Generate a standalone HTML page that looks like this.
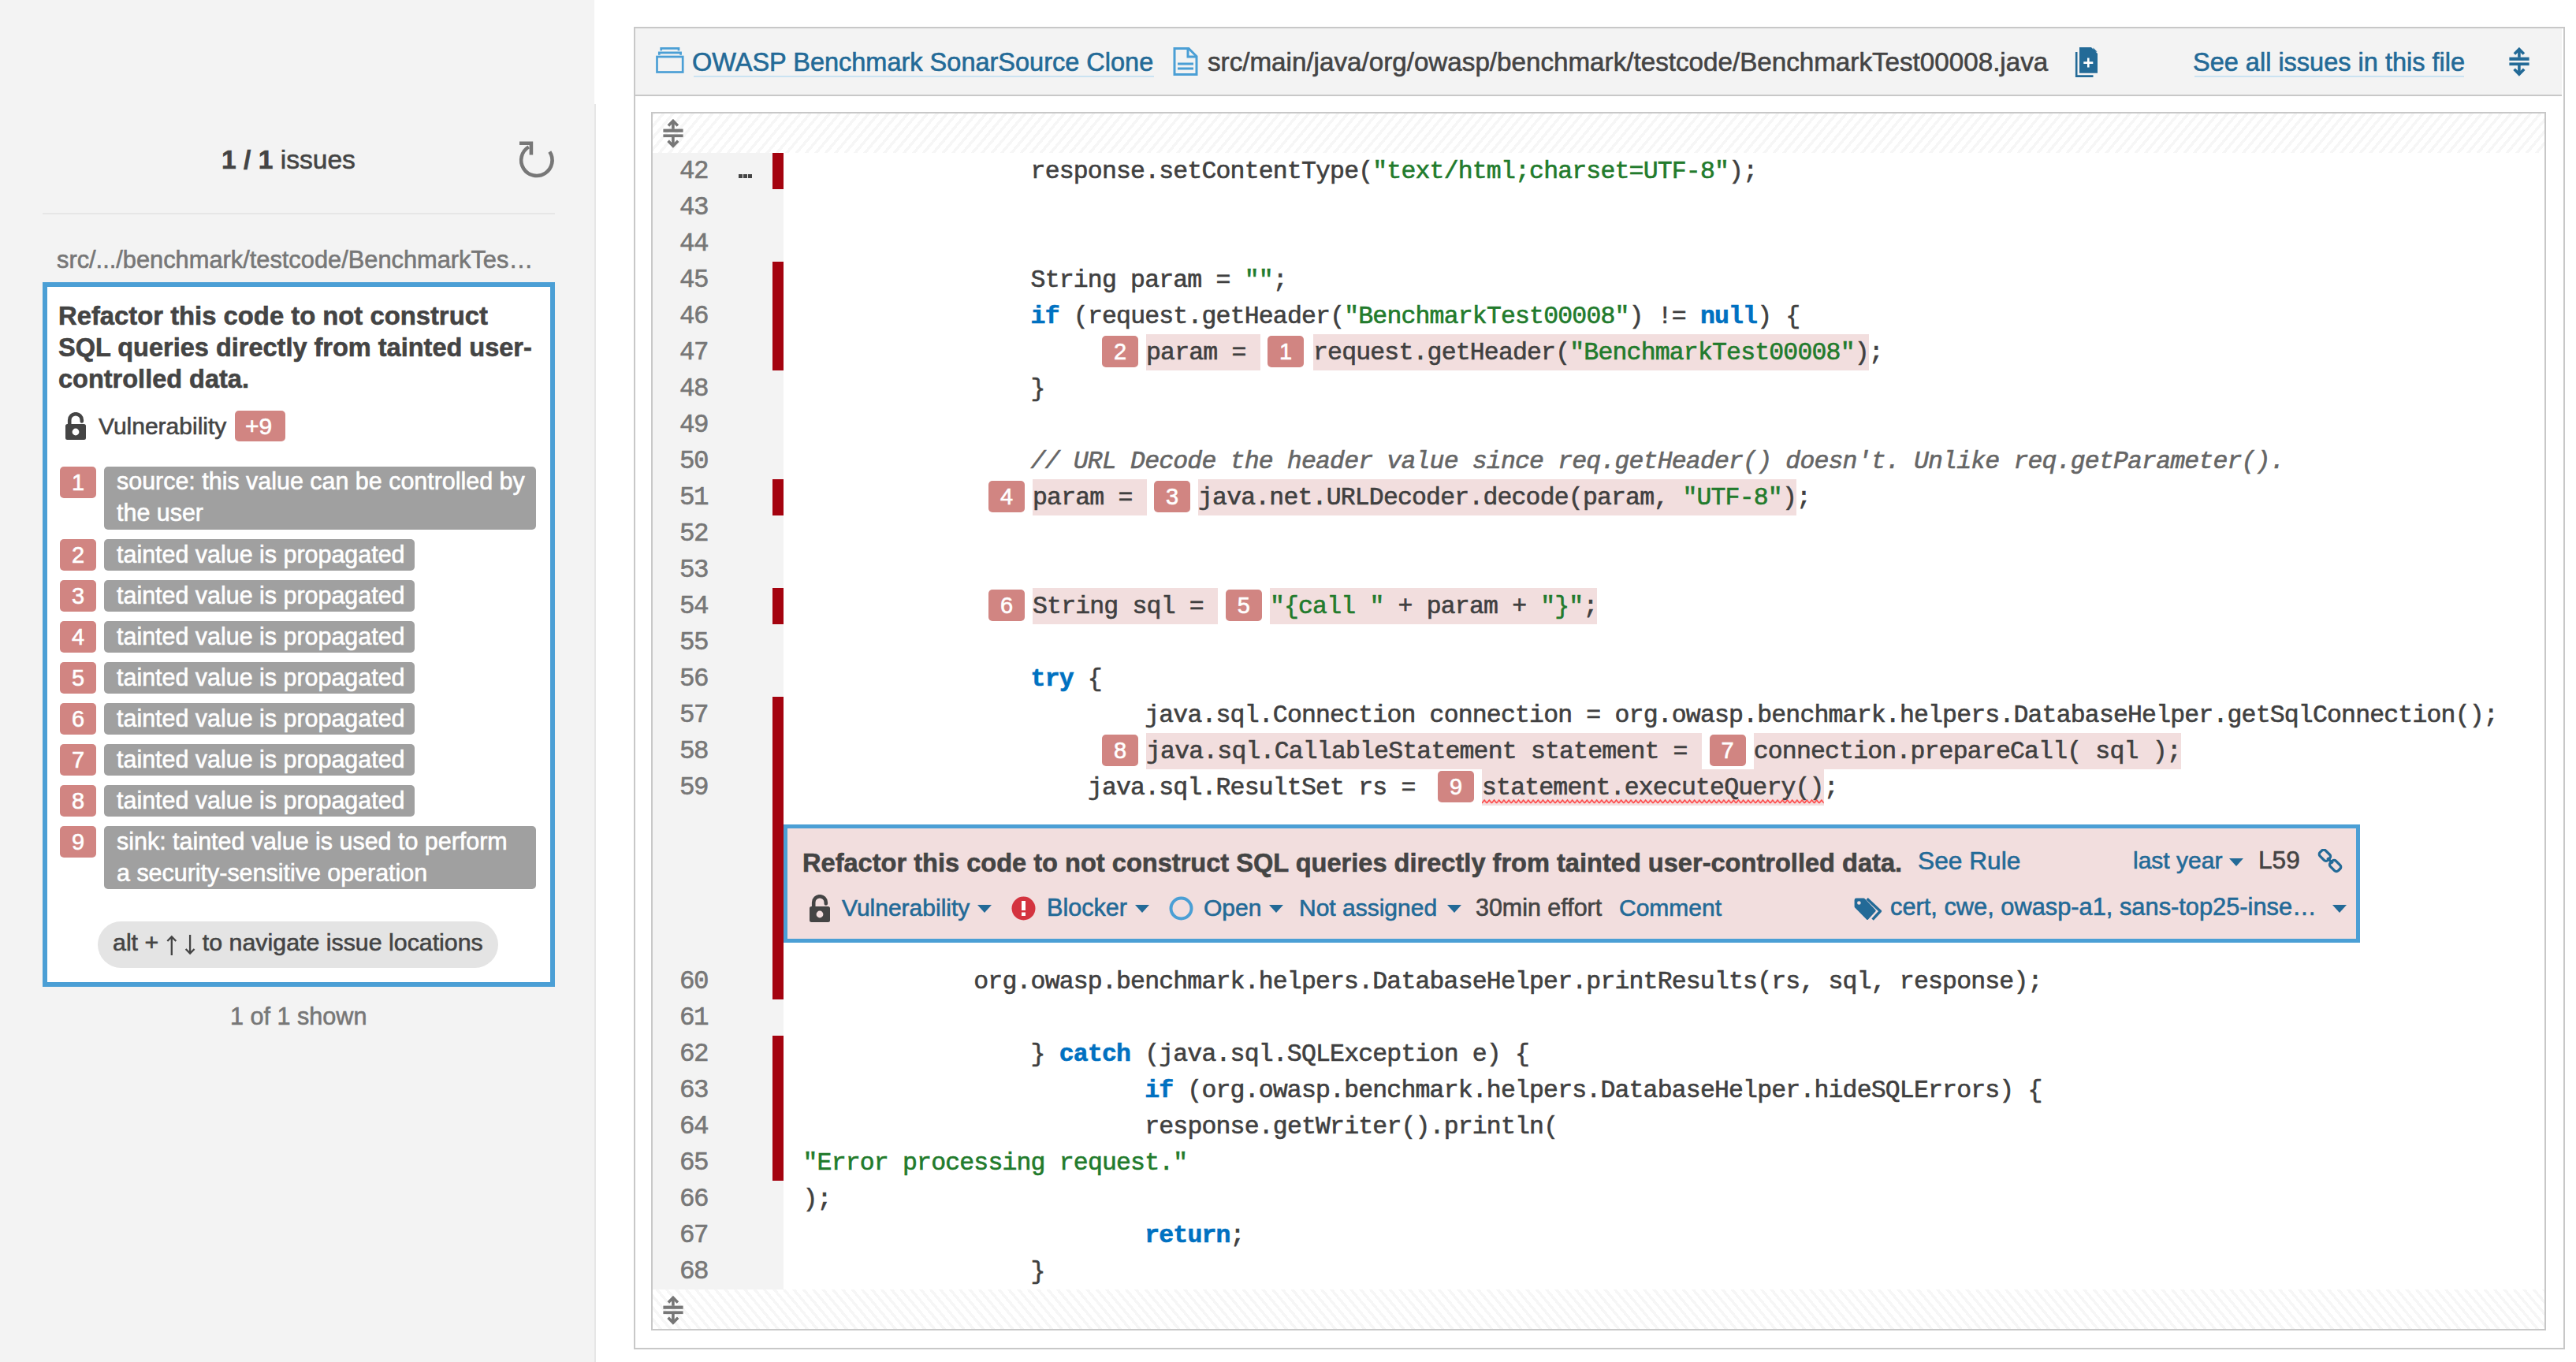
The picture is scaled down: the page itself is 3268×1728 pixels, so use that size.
<!DOCTYPE html>
<html><head><meta charset="utf-8"><title>SonarQube issue</title>
<style>
html,body{margin:0;padding:0}
body{width:3268px;height:1728px;position:relative;overflow:hidden;background:#fff;font-family:'Liberation Sans', sans-serif}
.t{position:absolute;white-space:pre;-webkit-text-stroke-width:0.6px}
.r{position:absolute;box-sizing:border-box}
.ic{position:absolute}
.mk{position:absolute;width:46px;height:40px;border-radius:5px;background:#d18582;color:#fff;font-family:'Liberation Sans', sans-serif;font-size:29px;line-height:41px;text-align:center;-webkit-text-stroke-width:0.6px}
.code{font-family:'Liberation Mono', monospace;font-size:30.1px}
</style></head><body>

<div class="r" style="left:0.0px;top:0.0px;width:754.0px;height:1728.0px;background:#f3f3f3"></div>
<div class="r" style="left:754.0px;top:132.0px;width:2.0px;height:1596.0px;background:#e6e6e6"></div>
<div class="t " style="left:281.0px;top:181.0px;font-size:33.6px;line-height:44px;color:#444;font-weight:normal;font-family:'Liberation Sans', sans-serif;"><b>1 / 1</b> issues</div>
<svg class="ic" style="left:655px;top:176px" width="52" height="52" viewBox="0 0 52 52"><path d="M42.3 16.4 A19.7 19.7 0 1 1 15.75 10.4" fill="none" stroke="#777" stroke-width="4.6"/><path d="M4 5.7 H18.9 V20.6" fill="none" stroke="#777" stroke-width="4.6" stroke-linejoin="miter"/></svg>
<div class="r" style="left:54.0px;top:270.0px;width:650.0px;height:2.0px;background:#e6e6e6"></div>
<div class="t " style="left:72.0px;top:309.8px;font-size:30.8px;line-height:40px;color:#777;font-weight:normal;font-family:'Liberation Sans', sans-serif;">src/.../benchmark/testcode/BenchmarkTes…</div>
<div class="r" style="left:54.0px;top:358.0px;width:650.0px;height:894.0px;background:#fff;border:6px solid #4b9fd5"></div>
<div class="t " style="left:74.0px;top:378.5px;font-size:32.8px;line-height:43px;color:#444;font-weight:bold;font-family:'Liberation Sans', sans-serif;">Refactor this code to not construct</div>
<div class="t " style="left:74.0px;top:420.0px;font-size:32.5px;line-height:42px;color:#444;font-weight:bold;font-family:'Liberation Sans', sans-serif;">SQL queries directly from tainted user-</div>
<div class="t " style="left:74.0px;top:459.5px;font-size:32.5px;line-height:42px;color:#444;font-weight:bold;font-family:'Liberation Sans', sans-serif;">controlled data.</div>
<svg class="ic" style="left:83px;top:523px" width="26.0" height="35.0" viewBox="0 0 26 35"><path d="M5.2 16 V10 A7.8 7.8 0 0 1 20.8 10 V11.5" fill="none" stroke="#444" stroke-width="4.6" stroke-linecap="round"/><path fill-rule="evenodd" fill="#444" d="M2.5 15 H23.5 A2.5 2.5 0 0 1 26 17.5 V32.5 A2.5 2.5 0 0 1 23.5 35 H2.5 A2.5 2.5 0 0 1 0 32.5 V17.5 A2.5 2.5 0 0 1 2.5 15 Z M13 20.6 A4.4 4.4 0 1 0 13 29.4 A4.4 4.4 0 1 0 13 20.6 Z"/></svg>
<div class="t " style="left:125.0px;top:520.6px;font-size:30px;line-height:39px;color:#444;font-weight:normal;font-family:'Liberation Sans', sans-serif;">Vulnerability</div>
<div class="r" style="left:298.0px;top:520.5px;width:64.0px;height:39.5px;background:#d18582;border-radius:5px"></div>
<div class="t " style="left:311.0px;top:520.6px;font-size:30px;line-height:39px;color:#fff;font-weight:normal;font-family:'Liberation Sans', sans-serif;">+9</div>
<div class="mk" style="left:76px;top:592.0px">1</div>
<div class="r" style="left:132.0px;top:592.0px;width:548.0px;height:80.0px;background:#a0a0a0;border-radius:5px"></div>
<div class="t " style="left:148.0px;top:590.3px;font-size:30.45px;line-height:40px;color:#fff;font-weight:normal;font-family:'Liberation Sans', sans-serif;">source: this value can be controlled by</div>
<div class="t " style="left:148.0px;top:630.3px;font-size:30.45px;line-height:40px;color:#fff;font-weight:normal;font-family:'Liberation Sans', sans-serif;">the user</div>
<div class="mk" style="left:76px;top:684.3px">2</div>
<div class="r" style="left:132.0px;top:684.3px;width:394.0px;height:40.0px;background:#a0a0a0;border-radius:5px"></div>
<div class="t " style="left:148.0px;top:682.6px;font-size:30.45px;line-height:40px;color:#fff;font-weight:normal;font-family:'Liberation Sans', sans-serif;">tainted value is propagated</div>
<div class="mk" style="left:76px;top:736.3px">3</div>
<div class="r" style="left:132.0px;top:736.3px;width:394.0px;height:40.0px;background:#a0a0a0;border-radius:5px"></div>
<div class="t " style="left:148.0px;top:734.6px;font-size:30.45px;line-height:40px;color:#fff;font-weight:normal;font-family:'Liberation Sans', sans-serif;">tainted value is propagated</div>
<div class="mk" style="left:76px;top:788.3px">4</div>
<div class="r" style="left:132.0px;top:788.3px;width:394.0px;height:40.0px;background:#a0a0a0;border-radius:5px"></div>
<div class="t " style="left:148.0px;top:786.6px;font-size:30.45px;line-height:40px;color:#fff;font-weight:normal;font-family:'Liberation Sans', sans-serif;">tainted value is propagated</div>
<div class="mk" style="left:76px;top:840.3px">5</div>
<div class="r" style="left:132.0px;top:840.3px;width:394.0px;height:40.0px;background:#a0a0a0;border-radius:5px"></div>
<div class="t " style="left:148.0px;top:838.6px;font-size:30.45px;line-height:40px;color:#fff;font-weight:normal;font-family:'Liberation Sans', sans-serif;">tainted value is propagated</div>
<div class="mk" style="left:76px;top:892.3px">6</div>
<div class="r" style="left:132.0px;top:892.3px;width:394.0px;height:40.0px;background:#a0a0a0;border-radius:5px"></div>
<div class="t " style="left:148.0px;top:890.6px;font-size:30.45px;line-height:40px;color:#fff;font-weight:normal;font-family:'Liberation Sans', sans-serif;">tainted value is propagated</div>
<div class="mk" style="left:76px;top:944.3px">7</div>
<div class="r" style="left:132.0px;top:944.3px;width:394.0px;height:40.0px;background:#a0a0a0;border-radius:5px"></div>
<div class="t " style="left:148.0px;top:942.6px;font-size:30.45px;line-height:40px;color:#fff;font-weight:normal;font-family:'Liberation Sans', sans-serif;">tainted value is propagated</div>
<div class="mk" style="left:76px;top:996.3px">8</div>
<div class="r" style="left:132.0px;top:996.3px;width:394.0px;height:40.0px;background:#a0a0a0;border-radius:5px"></div>
<div class="t " style="left:148.0px;top:994.6px;font-size:30.45px;line-height:40px;color:#fff;font-weight:normal;font-family:'Liberation Sans', sans-serif;">tainted value is propagated</div>
<div class="mk" style="left:76px;top:1048.4px">9</div>
<div class="r" style="left:132.0px;top:1048.4px;width:548.0px;height:80.0px;background:#a0a0a0;border-radius:5px"></div>
<div class="t " style="left:148.0px;top:1046.7px;font-size:30.45px;line-height:40px;color:#fff;font-weight:normal;font-family:'Liberation Sans', sans-serif;">sink: tainted value is used to perform</div>
<div class="t " style="left:148.0px;top:1086.7px;font-size:30.45px;line-height:40px;color:#fff;font-weight:normal;font-family:'Liberation Sans', sans-serif;">a security-sensitive operation</div>
<div class="r" style="left:124.0px;top:1168.5px;width:508.0px;height:59.0px;background:#e4e4e4;border-radius:30px"></div>
<div class="t " style="left:143.0px;top:1176.3px;font-size:30.35px;line-height:39px;color:#444;font-weight:normal;font-family:'Liberation Sans', sans-serif;">alt + <span style="color:transparent;-webkit-text-stroke-width:0">↑ ↓</span> to navigate issue locations</div>
<svg class="ic" style="left:0;top:0" width="300" height="1230"><g fill="none" stroke="#444" stroke-width="2.3"><path d="M217.8 1188.5 V1212 M212.3 1194 L217.8 1188.5 L223.3 1194"/><path d="M241.1 1186 V1209.5 M235.6 1204 L241.1 1209.5 L246.6 1204"/></g></svg>
<div class="t " style="left:292.0px;top:1269.3px;font-size:30.6px;line-height:40px;color:#777;font-weight:normal;font-family:'Liberation Sans', sans-serif;">1 of 1 shown</div>
<div class="r" style="left:804.0px;top:34.0px;width:2450.0px;height:1678.0px;border:2px solid #c8c8c8;background:#fff"></div>
<div class="r" style="left:806.0px;top:36.0px;width:2444.0px;height:86.0px;background:#f3f3f3;border-bottom:2px solid #c8c8c8"></div>
<svg class="ic" style="left:832px;top:59px" width="36" height="35" viewBox="0 0 36 35"><rect x="1.5" y="13" width="32.7" height="19.5" fill="none" stroke="#4b9fd5" stroke-width="2.7"/><path d="M4.3 10.8 V7.8 H31.6 V10.8 M6.7 5.2 V2.3 H29 V5.2" fill="none" stroke="#4b9fd5" stroke-width="2.7"/></svg>
<div class="t " style="left:878.0px;top:58.0px;font-size:32.5px;line-height:42px;color:#236a97;font-weight:normal;font-family:'Liberation Sans', sans-serif;">OWASP Benchmark SonarSource Clone</div>
<div class="r" style="left:880.0px;top:96.0px;width:584.0px;height:2.0px;background:#cae3f2"></div>
<svg class="ic" style="left:1488px;top:60px" width="32" height="36" viewBox="0 0 32 36"><path d="M2 1.5 H20 L30 11.5 V34.5 H2 Z" fill="none" stroke="#4b9fd5" stroke-width="3"/><path d="M19 1.5 V12 H30" fill="none" stroke="#4b9fd5" stroke-width="3"/><path d="M6 21 H26 M6 27 H26" stroke="#4b9fd5" stroke-width="3"/></svg>
<div class="t " style="left:1532.0px;top:57.0px;font-size:33.2px;line-height:43px;color:#444;font-weight:normal;font-family:'Liberation Sans', sans-serif;">src/main/java/org/owasp/benchmark/testcode/BenchmarkTest00008.java</div>
<svg class="ic" style="left:2632px;top:60px" width="30" height="38" viewBox="0 0 30 38"><path d="M2.2 6 V36.6 H23.5" fill="none" stroke="#236a97" stroke-width="2.6"/><path d="M6 0 H21 L29 8 V32.8 H6 Z" fill="#236a97"/><path d="M23.5 0.6 L28.6 5.8 H23.5 Z" fill="#236a97"/><path d="M17.3 13.6 V25.6 M11.3 19.6 H23.3" stroke="#fff" stroke-width="2.6"/></svg>
<div class="t " style="left:2782.0px;top:58.0px;font-size:32.5px;line-height:42px;color:#236a97;font-weight:normal;font-family:'Liberation Sans', sans-serif;">See all issues in this file</div>
<div class="r" style="left:2784.0px;top:96.0px;width:342.0px;height:2.0px;background:#cae3f2"></div>
<svg class="ic" style="left:3183px;top:60px" width="26" height="37" viewBox="0 0 26 37"><g fill="none" stroke="#236a97" stroke-width="3.6"><path d="M6.9 8.4 L12.9 2.4 L18.9 8.4"/><path d="M12.9 3 V12.8"/><path d="M12.9 22.8 V33.5"/><path d="M6.6 27.8 L12.9 34.1 L19.2 27.8"/></g><rect x="0.4" y="12.6" width="25.2" height="4.2" fill="#236a97"/><rect x="0.4" y="19.4" width="25.2" height="3.7" fill="#236a97"/></svg>
<div class="r" style="left:826.0px;top:142.0px;width:2404.0px;height:1546.0px;border:2px solid #c8c8c8;background:#fff"></div>
<div class="r" style="left:828.0px;top:144.0px;width:2400.0px;height:50.0px;background:repeating-linear-gradient(-50deg,#ffffff 0px,#ffffff 6px,#f6f6f6 6px,#f6f6f6 9.5px)"></div>
<div class="r" style="left:828.0px;top:1636.0px;width:2400.0px;height:50.0px;background:repeating-linear-gradient(50deg,#ffffff 0px,#ffffff 6px,#f6f6f6 6px,#f6f6f6 9.5px)"></div>
<svg class="ic" style="left:841px;top:151px" width="26" height="37" viewBox="0 0 26 37"><g fill="none" stroke="#777" stroke-width="3.6"><path d="M6.9 8.4 L12.9 2.4 L18.9 8.4"/><path d="M12.9 3 V12.8"/><path d="M12.9 22.8 V33.5"/><path d="M6.6 27.8 L12.9 34.1 L19.2 27.8"/></g><rect x="0.4" y="12.6" width="25.2" height="4.2" fill="#777"/><rect x="0.4" y="19.4" width="25.2" height="3.7" fill="#777"/></svg>
<svg class="ic" style="left:841px;top:1644px" width="26" height="37" viewBox="0 0 26 37"><g fill="none" stroke="#777" stroke-width="3.6"><path d="M6.9 8.4 L12.9 2.4 L18.9 8.4"/><path d="M12.9 3 V12.8"/><path d="M12.9 22.8 V33.5"/><path d="M6.6 27.8 L12.9 34.1 L19.2 27.8"/></g><rect x="0.4" y="12.6" width="25.2" height="4.2" fill="#777"/><rect x="0.4" y="19.4" width="25.2" height="3.7" fill="#777"/></svg>
<div class="r" style="left:828.0px;top:194.0px;width:166.0px;height:1442.0px;background:#f3f3f3"></div>
<div class="r" style="left:980.0px;top:194.0px;width:14.0px;height:46.0px;background:#a4030f"></div>
<div class="r" style="left:980.0px;top:332.0px;width:14.0px;height:46.0px;background:#a4030f"></div>
<div class="r" style="left:980.0px;top:378.0px;width:14.0px;height:46.0px;background:#a4030f"></div>
<div class="r" style="left:980.0px;top:424.0px;width:14.0px;height:46.0px;background:#a4030f"></div>
<div class="r" style="left:980.0px;top:608.0px;width:14.0px;height:46.0px;background:#a4030f"></div>
<div class="r" style="left:980.0px;top:746.0px;width:14.0px;height:46.0px;background:#a4030f"></div>
<div class="r" style="left:980.0px;top:884.0px;width:14.0px;height:46.0px;background:#a4030f"></div>
<div class="r" style="left:980.0px;top:930.0px;width:14.0px;height:46.0px;background:#a4030f"></div>
<div class="r" style="left:980.0px;top:976.0px;width:14.0px;height:246.0px;background:#a4030f"></div>
<div class="r" style="left:980.0px;top:1222.0px;width:14.0px;height:46.0px;background:#a4030f"></div>
<div class="r" style="left:980.0px;top:1314.0px;width:14.0px;height:46.0px;background:#a4030f"></div>
<div class="r" style="left:980.0px;top:1360.0px;width:14.0px;height:46.0px;background:#a4030f"></div>
<div class="r" style="left:980.0px;top:1406.0px;width:14.0px;height:46.0px;background:#a4030f"></div>
<div class="r" style="left:980.0px;top:1452.0px;width:14.0px;height:46.0px;background:#a4030f"></div>
<div class="t " style="left:862.0px;top:197.1px;font-size:32.5px;line-height:42px;color:#777;font-weight:normal;font-family:'Liberation Mono', monospace;letter-spacing:-1.4px">42</div>
<div class="t " style="left:862.0px;top:243.1px;font-size:32.5px;line-height:42px;color:#777;font-weight:normal;font-family:'Liberation Mono', monospace;letter-spacing:-1.4px">43</div>
<div class="t " style="left:862.0px;top:289.1px;font-size:32.5px;line-height:42px;color:#777;font-weight:normal;font-family:'Liberation Mono', monospace;letter-spacing:-1.4px">44</div>
<div class="t " style="left:862.0px;top:335.1px;font-size:32.5px;line-height:42px;color:#777;font-weight:normal;font-family:'Liberation Mono', monospace;letter-spacing:-1.4px">45</div>
<div class="t " style="left:862.0px;top:381.1px;font-size:32.5px;line-height:42px;color:#777;font-weight:normal;font-family:'Liberation Mono', monospace;letter-spacing:-1.4px">46</div>
<div class="t " style="left:862.0px;top:427.1px;font-size:32.5px;line-height:42px;color:#777;font-weight:normal;font-family:'Liberation Mono', monospace;letter-spacing:-1.4px">47</div>
<div class="t " style="left:862.0px;top:473.1px;font-size:32.5px;line-height:42px;color:#777;font-weight:normal;font-family:'Liberation Mono', monospace;letter-spacing:-1.4px">48</div>
<div class="t " style="left:862.0px;top:519.1px;font-size:32.5px;line-height:42px;color:#777;font-weight:normal;font-family:'Liberation Mono', monospace;letter-spacing:-1.4px">49</div>
<div class="t " style="left:862.0px;top:565.1px;font-size:32.5px;line-height:42px;color:#777;font-weight:normal;font-family:'Liberation Mono', monospace;letter-spacing:-1.4px">50</div>
<div class="t " style="left:862.0px;top:611.1px;font-size:32.5px;line-height:42px;color:#777;font-weight:normal;font-family:'Liberation Mono', monospace;letter-spacing:-1.4px">51</div>
<div class="t " style="left:862.0px;top:657.1px;font-size:32.5px;line-height:42px;color:#777;font-weight:normal;font-family:'Liberation Mono', monospace;letter-spacing:-1.4px">52</div>
<div class="t " style="left:862.0px;top:703.1px;font-size:32.5px;line-height:42px;color:#777;font-weight:normal;font-family:'Liberation Mono', monospace;letter-spacing:-1.4px">53</div>
<div class="t " style="left:862.0px;top:749.1px;font-size:32.5px;line-height:42px;color:#777;font-weight:normal;font-family:'Liberation Mono', monospace;letter-spacing:-1.4px">54</div>
<div class="t " style="left:862.0px;top:795.1px;font-size:32.5px;line-height:42px;color:#777;font-weight:normal;font-family:'Liberation Mono', monospace;letter-spacing:-1.4px">55</div>
<div class="t " style="left:862.0px;top:841.1px;font-size:32.5px;line-height:42px;color:#777;font-weight:normal;font-family:'Liberation Mono', monospace;letter-spacing:-1.4px">56</div>
<div class="t " style="left:862.0px;top:887.1px;font-size:32.5px;line-height:42px;color:#777;font-weight:normal;font-family:'Liberation Mono', monospace;letter-spacing:-1.4px">57</div>
<div class="t " style="left:862.0px;top:933.1px;font-size:32.5px;line-height:42px;color:#777;font-weight:normal;font-family:'Liberation Mono', monospace;letter-spacing:-1.4px">58</div>
<div class="t " style="left:862.0px;top:979.1px;font-size:32.5px;line-height:42px;color:#777;font-weight:normal;font-family:'Liberation Mono', monospace;letter-spacing:-1.4px">59</div>
<div class="t " style="left:862.0px;top:1225.1px;font-size:32.5px;line-height:42px;color:#777;font-weight:normal;font-family:'Liberation Mono', monospace;letter-spacing:-1.4px">60</div>
<div class="t " style="left:862.0px;top:1271.1px;font-size:32.5px;line-height:42px;color:#777;font-weight:normal;font-family:'Liberation Mono', monospace;letter-spacing:-1.4px">61</div>
<div class="t " style="left:862.0px;top:1317.1px;font-size:32.5px;line-height:42px;color:#777;font-weight:normal;font-family:'Liberation Mono', monospace;letter-spacing:-1.4px">62</div>
<div class="t " style="left:862.0px;top:1363.1px;font-size:32.5px;line-height:42px;color:#777;font-weight:normal;font-family:'Liberation Mono', monospace;letter-spacing:-1.4px">63</div>
<div class="t " style="left:862.0px;top:1409.1px;font-size:32.5px;line-height:42px;color:#777;font-weight:normal;font-family:'Liberation Mono', monospace;letter-spacing:-1.4px">64</div>
<div class="t " style="left:862.0px;top:1455.1px;font-size:32.5px;line-height:42px;color:#777;font-weight:normal;font-family:'Liberation Mono', monospace;letter-spacing:-1.4px">65</div>
<div class="t " style="left:862.0px;top:1501.1px;font-size:32.5px;line-height:42px;color:#777;font-weight:normal;font-family:'Liberation Mono', monospace;letter-spacing:-1.4px">66</div>
<div class="t " style="left:862.0px;top:1547.1px;font-size:32.5px;line-height:42px;color:#777;font-weight:normal;font-family:'Liberation Mono', monospace;letter-spacing:-1.4px">67</div>
<div class="t " style="left:862.0px;top:1593.1px;font-size:32.5px;line-height:42px;color:#777;font-weight:normal;font-family:'Liberation Mono', monospace;letter-spacing:-1.4px">68</div>
<div class="r" style="left:937.0px;top:221.0px;width:4.5px;height:5.0px;background:#444"></div>
<div class="r" style="left:943.2px;top:221.0px;width:4.5px;height:5.0px;background:#444"></div>
<div class="r" style="left:949.4px;top:221.0px;width:4.5px;height:5.0px;background:#444"></div>
<div class="t " style="left:1307.6px;top:197.0px;font-size:31.5px;line-height:41px;color:#404040;font-weight:normal;font-family:'Liberation Mono', monospace;font-style:normal;letter-spacing:-0.833px">response.setContentType(</div>
<div class="t " style="left:1741.3px;top:197.0px;font-size:31.5px;line-height:41px;color:#227b2c;font-weight:normal;font-family:'Liberation Mono', monospace;font-style:normal;letter-spacing:-0.833px">"text/html;charset=UTF-8"</div>
<div class="t " style="left:2193.1px;top:197.0px;font-size:31.5px;line-height:41px;color:#404040;font-weight:normal;font-family:'Liberation Mono', monospace;font-style:normal;letter-spacing:-0.833px">);</div>
<div class="t " style="left:1307.6px;top:335.0px;font-size:31.5px;line-height:41px;color:#404040;font-weight:normal;font-family:'Liberation Mono', monospace;font-style:normal;letter-spacing:-0.833px">String param = </div>
<div class="t " style="left:1578.7px;top:335.0px;font-size:31.5px;line-height:41px;color:#227b2c;font-weight:normal;font-family:'Liberation Mono', monospace;font-style:normal;letter-spacing:-0.833px">""</div>
<div class="t " style="left:1614.8px;top:335.0px;font-size:31.5px;line-height:41px;color:#404040;font-weight:normal;font-family:'Liberation Mono', monospace;font-style:normal;letter-spacing:-0.833px">;</div>
<div class="t " style="left:1307.6px;top:381.0px;font-size:31.5px;line-height:41px;color:#0071c1;font-weight:bold;font-family:'Liberation Mono', monospace;font-style:normal;letter-spacing:-0.833px">if</div>
<div class="t " style="left:1343.8px;top:381.0px;font-size:31.5px;line-height:41px;color:#404040;font-weight:normal;font-family:'Liberation Mono', monospace;font-style:normal;letter-spacing:-0.833px"> (request.getHeader(</div>
<div class="t " style="left:1705.2px;top:381.0px;font-size:31.5px;line-height:41px;color:#227b2c;font-weight:normal;font-family:'Liberation Mono', monospace;font-style:normal;letter-spacing:-0.833px">"BenchmarkTest00008"</div>
<div class="t " style="left:2066.6px;top:381.0px;font-size:31.5px;line-height:41px;color:#404040;font-weight:normal;font-family:'Liberation Mono', monospace;font-style:normal;letter-spacing:-0.833px">) != </div>
<div class="t " style="left:2156.9px;top:381.0px;font-size:31.5px;line-height:41px;color:#0071c1;font-weight:bold;font-family:'Liberation Mono', monospace;font-style:normal;letter-spacing:-0.833px">null</div>
<div class="t " style="left:2229.2px;top:381.0px;font-size:31.5px;line-height:41px;color:#404040;font-weight:normal;font-family:'Liberation Mono', monospace;font-style:normal;letter-spacing:-0.833px">) {</div>
<div class="mk" style="left:1398.0px;top:425.8px">2</div>
<div class="r" style="left:1454.0px;top:424.0px;width:144.6px;height:46.0px;background:#f2dede"></div>
<div class="t " style="left:1454.0px;top:427.0px;font-size:31.5px;line-height:41px;color:#404040;font-weight:normal;font-family:'Liberation Mono', monospace;font-style:normal;letter-spacing:-0.833px">param = </div>
<div class="mk" style="left:1608.0px;top:425.8px">1</div>
<div class="r" style="left:1666.0px;top:424.0px;width:704.7px;height:46.0px;background:#f2dede"></div>
<div class="t " style="left:1666.0px;top:427.0px;font-size:31.5px;line-height:41px;color:#404040;font-weight:normal;font-family:'Liberation Mono', monospace;font-style:normal;letter-spacing:-0.833px">request.getHeader(</div>
<div class="t " style="left:1991.3px;top:427.0px;font-size:31.5px;line-height:41px;color:#227b2c;font-weight:normal;font-family:'Liberation Mono', monospace;font-style:normal;letter-spacing:-0.833px">"BenchmarkTest00008"</div>
<div class="t " style="left:2352.7px;top:427.0px;font-size:31.5px;line-height:41px;color:#404040;font-weight:normal;font-family:'Liberation Mono', monospace;font-style:normal;letter-spacing:-0.833px">)</div>
<div class="t " style="left:2370.7px;top:427.0px;font-size:31.5px;line-height:41px;color:#404040;font-weight:normal;font-family:'Liberation Mono', monospace;font-style:normal;letter-spacing:-0.833px">;</div>
<div class="t " style="left:1307.6px;top:473.0px;font-size:31.5px;line-height:41px;color:#404040;font-weight:normal;font-family:'Liberation Mono', monospace;font-style:normal;letter-spacing:-0.833px">}</div>
<div class="t " style="left:1307.6px;top:565.0px;font-size:31.5px;line-height:41px;color:#666;font-weight:normal;font-family:'Liberation Mono', monospace;font-style:italic;letter-spacing:-0.833px">// URL Decode the header value since req.getHeader() doesn't. Unlike req.getParameter().</div>
<div class="mk" style="left:1254.0px;top:609.8px">4</div>
<div class="r" style="left:1310.0px;top:608.0px;width:144.6px;height:46.0px;background:#f2dede"></div>
<div class="t " style="left:1310.0px;top:611.0px;font-size:31.5px;line-height:41px;color:#404040;font-weight:normal;font-family:'Liberation Mono', monospace;font-style:normal;letter-spacing:-0.833px">param = </div>
<div class="mk" style="left:1464.0px;top:609.8px">3</div>
<div class="r" style="left:1520.0px;top:608.0px;width:758.9px;height:46.0px;background:#f2dede"></div>
<div class="t " style="left:1520.0px;top:611.0px;font-size:31.5px;line-height:41px;color:#404040;font-weight:normal;font-family:'Liberation Mono', monospace;font-style:normal;letter-spacing:-0.833px">java.net.URLDecoder.decode(param, </div>
<div class="t " style="left:2134.4px;top:611.0px;font-size:31.5px;line-height:41px;color:#227b2c;font-weight:normal;font-family:'Liberation Mono', monospace;font-style:normal;letter-spacing:-0.833px">"UTF-8"</div>
<div class="t " style="left:2260.9px;top:611.0px;font-size:31.5px;line-height:41px;color:#404040;font-weight:normal;font-family:'Liberation Mono', monospace;font-style:normal;letter-spacing:-0.833px">);</div>
<div class="mk" style="left:1254.0px;top:747.8px">6</div>
<div class="r" style="left:1310.0px;top:746.0px;width:234.9px;height:46.0px;background:#f2dede"></div>
<div class="t " style="left:1310.0px;top:749.0px;font-size:31.5px;line-height:41px;color:#404040;font-weight:normal;font-family:'Liberation Mono', monospace;font-style:normal;letter-spacing:-0.833px">String sql = </div>
<div class="mk" style="left:1554.9px;top:747.8px">5</div>
<div class="r" style="left:1610.9px;top:746.0px;width:415.6px;height:46.0px;background:#f2dede"></div>
<div class="t " style="left:1610.9px;top:749.0px;font-size:31.5px;line-height:41px;color:#227b2c;font-weight:normal;font-family:'Liberation Mono', monospace;font-style:normal;letter-spacing:-0.833px">"{call "</div>
<div class="t " style="left:1755.5px;top:749.0px;font-size:31.5px;line-height:41px;color:#404040;font-weight:normal;font-family:'Liberation Mono', monospace;font-style:normal;letter-spacing:-0.833px"> + param + </div>
<div class="t " style="left:1954.2px;top:749.0px;font-size:31.5px;line-height:41px;color:#227b2c;font-weight:normal;font-family:'Liberation Mono', monospace;font-style:normal;letter-spacing:-0.833px">"}"</div>
<div class="t " style="left:2008.5px;top:749.0px;font-size:31.5px;line-height:41px;color:#404040;font-weight:normal;font-family:'Liberation Mono', monospace;font-style:normal;letter-spacing:-0.833px">;</div>
<div class="t " style="left:1307.6px;top:841.0px;font-size:31.5px;line-height:41px;color:#0071c1;font-weight:bold;font-family:'Liberation Mono', monospace;font-style:normal;letter-spacing:-0.833px">try</div>
<div class="t " style="left:1361.8px;top:841.0px;font-size:31.5px;line-height:41px;color:#404040;font-weight:normal;font-family:'Liberation Mono', monospace;font-style:normal;letter-spacing:-0.833px"> {</div>
<div class="t " style="left:1452.2px;top:887.0px;font-size:31.5px;line-height:41px;color:#404040;font-weight:normal;font-family:'Liberation Mono', monospace;font-style:normal;letter-spacing:-0.833px">java.sql.Connection connection = org.owasp.benchmark.helpers.DatabaseHelper.getSqlConnection();</div>
<div class="mk" style="left:1398.0px;top:931.8px">8</div>
<div class="r" style="left:1454.0px;top:930.0px;width:704.7px;height:46.0px;background:#f2dede"></div>
<div class="t " style="left:1454.0px;top:933.0px;font-size:31.5px;line-height:41px;color:#404040;font-weight:normal;font-family:'Liberation Mono', monospace;font-style:normal;letter-spacing:-0.833px">java.sql.CallableStatement statement = </div>
<div class="mk" style="left:2168.7px;top:931.8px">7</div>
<div class="r" style="left:2224.7px;top:930.0px;width:542.1px;height:46.0px;background:#f2dede"></div>
<div class="t " style="left:2224.7px;top:933.0px;font-size:31.5px;line-height:41px;color:#404040;font-weight:normal;font-family:'Liberation Mono', monospace;font-style:normal;letter-spacing:-0.833px">connection.prepareCall( sql );</div>
<div class="t " style="left:1379.9px;top:979.0px;font-size:31.5px;line-height:41px;color:#404040;font-weight:normal;font-family:'Liberation Mono', monospace;font-style:normal;letter-spacing:-0.833px">java.sql.ResultSet rs = </div>
<div class="mk" style="left:1824.0px;top:977.8px">9</div>
<div class="r" style="left:1880.0px;top:976.0px;width:433.7px;height:46.0px;background:#f2dede"></div>
<div class="t " style="left:1880.0px;top:979.0px;font-size:31.5px;line-height:41px;color:#404040;font-weight:normal;font-family:'Liberation Mono', monospace;font-style:normal;letter-spacing:-0.833px">statement.executeQuery();</div>
<svg class="ic" style="left:1880px;top:1013px" width="433.7" height="8"><defs><pattern id="zz" width="6.2" height="8" patternUnits="userSpaceOnUse"><path d="M0 6 L3.1 2 L6.2 6" fill="none" stroke="#f44" stroke-width="1.6"/></pattern></defs><rect width="100%" height="8" fill="url(#zz)"/></svg>
<div class="t " style="left:1235.3px;top:1225.0px;font-size:31.5px;line-height:41px;color:#404040;font-weight:normal;font-family:'Liberation Mono', monospace;font-style:normal;letter-spacing:-0.833px">org.owasp.benchmark.helpers.DatabaseHelper.printResults(rs, sql, response);</div>
<div class="t " style="left:1307.6px;top:1317.0px;font-size:31.5px;line-height:41px;color:#404040;font-weight:normal;font-family:'Liberation Mono', monospace;font-style:normal;letter-spacing:-0.833px">} </div>
<div class="t " style="left:1343.8px;top:1317.0px;font-size:31.5px;line-height:41px;color:#0071c1;font-weight:bold;font-family:'Liberation Mono', monospace;font-style:normal;letter-spacing:-0.833px">catch</div>
<div class="t " style="left:1434.1px;top:1317.0px;font-size:31.5px;line-height:41px;color:#404040;font-weight:normal;font-family:'Liberation Mono', monospace;font-style:normal;letter-spacing:-0.833px"> (java.sql.SQLException e) {</div>
<div class="t " style="left:1452.2px;top:1363.0px;font-size:31.5px;line-height:41px;color:#0071c1;font-weight:bold;font-family:'Liberation Mono', monospace;font-style:normal;letter-spacing:-0.833px">if</div>
<div class="t " style="left:1488.3px;top:1363.0px;font-size:31.5px;line-height:41px;color:#404040;font-weight:normal;font-family:'Liberation Mono', monospace;font-style:normal;letter-spacing:-0.833px"> (org.owasp.benchmark.helpers.DatabaseHelper.hideSQLErrors) {</div>
<div class="t " style="left:1452.2px;top:1409.0px;font-size:31.5px;line-height:41px;color:#404040;font-weight:normal;font-family:'Liberation Mono', monospace;font-style:normal;letter-spacing:-0.833px">response.getWriter().println(</div>
<div class="t " style="left:1018.5px;top:1455.0px;font-size:31.5px;line-height:41px;color:#227b2c;font-weight:normal;font-family:'Liberation Mono', monospace;font-style:normal;letter-spacing:-0.833px">"Error processing request."</div>
<div class="t " style="left:1018.5px;top:1501.0px;font-size:31.5px;line-height:41px;color:#404040;font-weight:normal;font-family:'Liberation Mono', monospace;font-style:normal;letter-spacing:-0.833px">);</div>
<div class="t " style="left:1452.2px;top:1547.0px;font-size:31.5px;line-height:41px;color:#0071c1;font-weight:bold;font-family:'Liberation Mono', monospace;font-style:normal;letter-spacing:-0.833px">return</div>
<div class="t " style="left:1560.6px;top:1547.0px;font-size:31.5px;line-height:41px;color:#404040;font-weight:normal;font-family:'Liberation Mono', monospace;font-style:normal;letter-spacing:-0.833px">;</div>
<div class="t " style="left:1307.6px;top:1593.0px;font-size:31.5px;line-height:41px;color:#404040;font-weight:normal;font-family:'Liberation Mono', monospace;font-style:normal;letter-spacing:-0.833px">}</div>
<div class="r" style="left:994.0px;top:1046.0px;width:2000.0px;height:150.0px;background:#f2dede;border:5.5px solid #4b9fd5"></div>
<div class="t " style="left:1018.0px;top:1073.7px;font-size:32.5px;line-height:42px;color:#444;font-weight:bold;font-family:'Liberation Sans', sans-serif;font-size:32.6px">Refactor this code to not construct SQL queries directly from tainted user-controlled data.</div>
<div class="t " style="left:2433.0px;top:1071.5px;font-size:31.7px;line-height:41px;color:#236a97;font-weight:normal;font-family:'Liberation Sans', sans-serif;">See Rule</div>
<div class="t " style="left:2706.0px;top:1072.0px;font-size:30px;line-height:39px;color:#236a97;font-weight:normal;font-family:'Liberation Sans', sans-serif;">last year</div>
<svg class="ic" style="left:2828px;top:1089px" width="18" height="10" viewBox="0 0 18 10"><path d="M0 0 H18 L9 10 Z" fill="#236a97"/></svg>
<div class="t " style="left:2865.0px;top:1070.5px;font-size:31.6px;line-height:41px;color:#444;font-weight:normal;font-family:'Liberation Sans', sans-serif;">L59</div>
<svg class="ic" style="left:2940px;top:1077px" width="32" height="31" viewBox="0 0 32 31"><g fill="none" stroke="#236a97" stroke-width="3.3"><rect x="2.4" y="3.2" width="14" height="10" rx="3.3" transform="rotate(45 9.4 8.2)"/><rect x="15.6" y="16.5" width="14" height="10" rx="3.3" transform="rotate(45 22.6 21.5)"/><path d="M12.5 11.3 L19.5 18.4"/></g></svg>
<svg class="ic" style="left:1027px;top:1135px" width="26.0" height="35.0" viewBox="0 0 26 35"><path d="M5.2 16 V10 A7.8 7.8 0 0 1 20.8 10 V11.5" fill="none" stroke="#444" stroke-width="4.6" stroke-linecap="round"/><path fill-rule="evenodd" fill="#444" d="M2.5 15 H23.5 A2.5 2.5 0 0 1 26 17.5 V32.5 A2.5 2.5 0 0 1 23.5 35 H2.5 A2.5 2.5 0 0 1 0 32.5 V17.5 A2.5 2.5 0 0 1 2.5 15 Z M13 20.6 A4.4 4.4 0 1 0 13 29.4 A4.4 4.4 0 1 0 13 20.6 Z"/></svg>
<div class="t " style="left:1068.0px;top:1131.6px;font-size:30px;line-height:39px;color:#236a97;font-weight:normal;font-family:'Liberation Sans', sans-serif;">Vulnerability</div>
<svg class="ic" style="left:1240px;top:1147.5px" width="18" height="10" viewBox="0 0 18 10"><path d="M0 0 H18 L9 10 Z" fill="#236a97"/></svg>
<svg class="ic" style="left:1283px;top:1137px" width="31" height="31" viewBox="0 0 31 31"><circle cx="15.5" cy="15.5" r="15" fill="#d4333f"/><rect x="13" y="6" width="5" height="12" fill="#fff"/><rect x="13" y="20.5" width="5" height="4.5" fill="#fff"/></svg>
<div class="t " style="left:1328.0px;top:1130.6px;font-size:30.6px;line-height:40px;color:#236a97;font-weight:normal;font-family:'Liberation Sans', sans-serif;">Blocker</div>
<svg class="ic" style="left:1440px;top:1147.5px" width="18" height="10" viewBox="0 0 18 10"><path d="M0 0 H18 L9 10 Z" fill="#236a97"/></svg>
<svg class="ic" style="left:1483px;top:1137px" width="31" height="31" viewBox="0 0 31 31"><circle cx="15.5" cy="15.5" r="13" fill="none" stroke="#4b9fd5" stroke-width="4"/></svg>
<div class="t " style="left:1527.0px;top:1131.6px;font-size:30px;line-height:39px;color:#236a97;font-weight:normal;font-family:'Liberation Sans', sans-serif;">Open</div>
<svg class="ic" style="left:1610px;top:1147.5px" width="18" height="10" viewBox="0 0 18 10"><path d="M0 0 H18 L9 10 Z" fill="#236a97"/></svg>
<div class="t " style="left:1648.0px;top:1131.6px;font-size:30px;line-height:39px;color:#236a97;font-weight:normal;font-family:'Liberation Sans', sans-serif;">Not assigned</div>
<svg class="ic" style="left:1836px;top:1147.5px" width="18" height="10" viewBox="0 0 18 10"><path d="M0 0 H18 L9 10 Z" fill="#236a97"/></svg>
<div class="t " style="left:1872.0px;top:1130.6px;font-size:30.45px;line-height:40px;color:#444;font-weight:normal;font-family:'Liberation Sans', sans-serif;">30min effort</div>
<div class="t " style="left:2054.0px;top:1131.6px;font-size:30px;line-height:39px;color:#236a97;font-weight:normal;font-family:'Liberation Sans', sans-serif;">Comment</div>
<svg class="ic" style="left:2351px;top:1139px" width="38" height="31" viewBox="0 0 38 31"><path d="M1.6 3 Q1.6 0.6 4 0.6 H13.4 Q14.2 0.6 14.8 1.2 L28.4 15.6 Q29 16.4 28.4 17.2 L19 27.6 Q18 28.6 17 27.6 L2.4 12.8 Q1.6 12 1.6 11 Z" fill="#236a97"/><circle cx="7.4" cy="6.5" r="2.3" fill="#f2dede"/><path d="M17.6 1.2 L34.4 17 L24.6 27.6" fill="none" stroke="#236a97" stroke-width="3.4" stroke-linejoin="round"/></svg>
<div class="t " style="left:2398.0px;top:1131.1px;font-size:30.8px;line-height:40px;color:#236a97;font-weight:normal;font-family:'Liberation Sans', sans-serif;">cert, cwe, owasp-a1, sans-top25-inse…</div>
<svg class="ic" style="left:2959px;top:1147.5px" width="18" height="10" viewBox="0 0 18 10"><path d="M0 0 H18 L9 10 Z" fill="#236a97"/></svg>
</body></html>
